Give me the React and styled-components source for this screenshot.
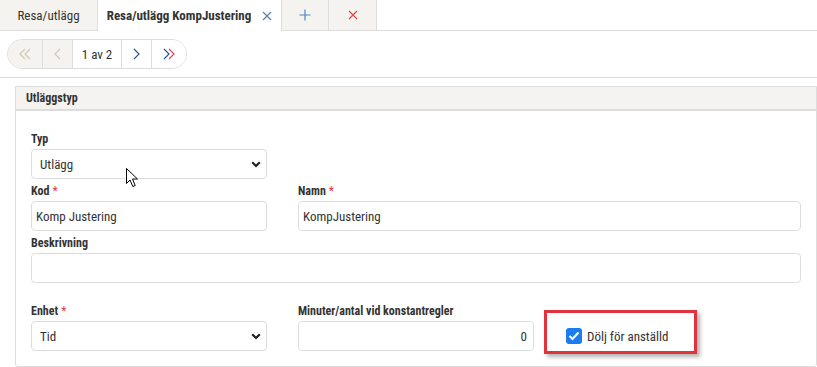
import styled, { createGlobalStyle } from 'styled-components'

const beige = '#f4f3ef'
const line = '#dddddd'

const GlobalStyle = createGlobalStyle`
  body {
    margin: 0;
    background: #fff;
    font-family: 'Roboto Condensed', Roboto, 'Liberation Sans', sans-serif;
    font-stretch: condensed;
    font-size: 12px;
    color: #333;
  }
`

const TabBar = styled.div`
  display: flex;
  height: 31px;
  box-sizing: border-box;
  border-bottom: 1px solid ${line};
`

const Tab = styled.div`
  box-sizing: border-box;
  width: ${props => props.$w}px;
  height: ${props => (props.$active ? 31 : 30)}px;
  display: flex;
  align-items: center;
  justify-content: center;
  gap: 11px;
  background: ${props => (props.$active ? '#fff' : beige)};
  border-right: 1px solid ${line};
  font-size: 13px;
  font-weight: ${props => (props.$active ? 700 : 400)};
  color: #333;
`

const Toolbar = styled.div`
  padding: 8px 7px;
  border-bottom: 1px solid ${line};
`

const Pager = styled.div`
  display: inline-flex;
  height: 30px;
  box-sizing: border-box;
  border: 1px solid ${line};
  border-radius: 15px;
  overflow: hidden;
`

const PageButton = styled.div`
  box-sizing: border-box;
  width: ${props => props.$w}px;
  display: flex;
  align-items: center;
  justify-content: center;
  background: ${props => (props.$disabled ? beige : '#fff')};
  font-size: 13px;
  color: #333;

  & + & {
    border-left: 1px solid ${line};
  }
`

const Content = styled.div`
  padding: 8px 0 0 15px;
`

const Panel = styled.section`
  border: 1px solid ${line};
  border-radius: 0 0 3px 3px;
`

const PanelHeader = styled.div`
  height: 22px;
  display: flex;
  align-items: center;
  padding-left: 10px;
  background: ${beige};
  border-bottom: 2px solid ${line};
  font-size: 12px;
  font-weight: 700;
`

const FormGrid = styled.div`
  display: grid;
  grid-template-columns: repeat(3, 236px);
  column-gap: 31px;
  row-gap: 4px;
  padding: 20px 15px 15px 15px;
`

const Field = styled.div`
  position: relative;
  display: flex;
  flex-direction: column;
  grid-column: span ${props => props.$span || 1};
  margin-top: ${props => (props.$spaced ? 16 : 0)}px;
`

const Label = styled.label`
  line-height: 16px;
  margin-bottom: 2px;
  font-weight: 700;
  font-size: 12px;
  color: #333;
`

const Required = styled.span`
  color: #e0393e;
  font-weight: 400;
  margin-left: 3px;
`

const TextInput = styled.input`
  box-sizing: border-box;
  width: 100%;
  height: 30px;
  border: 1px solid ${line};
  border-radius: 4px;
  padding: 0 ${props => (props.$right ? 6 : 4)}px;
  font: inherit;
  font-size: 13px;
  color: #333;
  text-align: ${props => (props.$right ? 'right' : 'left')};
  background: #fff;
  outline: none;
`

const SelectWrap = styled.div`
  position: relative;
  height: 30px;
`

const Select = styled.select`
  appearance: none;
  box-sizing: border-box;
  width: 100%;
  height: 30px;
  border: 1px solid ${line};
  border-radius: 4px;
  padding: 0 24px 0 8px;
  font: inherit;
  font-size: 13px;
  color: #333;
  background: #fff;
  outline: none;
`

const SelectArrow = styled.svg`
  position: absolute;
  right: 6px;
  top: 12px;
  pointer-events: none;
`

const Cursor = styled.svg`
  position: absolute;
  left: 95px;
  top: 37px;
  pointer-events: none;
`

const CheckCell = styled.div`
  position: relative;
  align-self: end;
  height: 30px;
  display: flex;
  align-items: center;
  padding-left: 1px;
  margin-top: 16px;
`

const Highlight = styled.div`
  position: absolute;
  left: -21px;
  top: -11px;
  width: 153px;
  height: 44px;
  box-sizing: border-box;
  border: 3px solid #e2323c;
  box-shadow: 3px 3px 4px rgba(0, 0, 0, 0.3);
  pointer-events: none;
`

const CheckBox = styled.span`
  width: 16px;
  height: 16px;
  border-radius: 3px;
  background: #1a7cf0;
  display: flex;
  align-items: center;
  justify-content: center;
`

const CheckText = styled.span`
  margin-left: 5px;
  font-size: 13px;
  color: #333;
`

const Chevron = ({ dir = 'right', double, color, color2 }) => {
  const pts = dir === 'right' ? '1,1 6,6 1,11' : '6,1 1,6 6,11'
  return (
    <svg width={double ? 12 : 7} height="12" viewBox={`0 0 ${double ? 12 : 7} 12`} fill="none">
      <polyline points={pts} stroke={color} strokeWidth="1.2" />
      {double && (
        <polyline
          points={pts}
          transform="translate(5 0)"
          stroke={color2 || color}
          strokeWidth="1.2"
        />
      )}
    </svg>
  )
}

const Cross = ({ color, size = 10 }) => (
  <svg width={size} height={size} viewBox="0 0 10 10">
    <path d="M1 1 L9 9 M9 1 L1 9" stroke={color} strokeWidth="1.2" />
  </svg>
)

const Plus = ({ color }) => (
  <svg width="12" height="12" viewBox="0 0 12 12">
    <path d="M6 0.5 V11.5 M0.5 6 H11.5" stroke={color} strokeWidth="1.2" />
  </svg>
)

const DownArrow = () => (
  <SelectArrow width="10" height="7" viewBox="0 0 10 7">
    <polyline points="1.2,1.2 5,5 8.8,1.2" fill="none" stroke="#222" strokeWidth="2.2" />
  </SelectArrow>
)

const App = () => {
  const disabled = '#cdc8b9'
  const blue = '#2f5597'

  return (
    <>
      <GlobalStyle />
      <TabBar>
        <Tab $w={98}>Resa/utlägg</Tab>
        <Tab $w={184} $active>
          Resa/utlägg KompJustering
          <Cross color="#5b7fa6" size={10} />
        </Tab>
        <Tab $w={47}>
          <Plus color="#4a86d0" />
        </Tab>
        <Tab $w={48}>
          <Cross color="#e04848" />
        </Tab>
      </TabBar>

      <Toolbar>
        <Pager>
          <PageButton $w={34} $disabled>
            <Chevron dir="left" double color={disabled} />
          </PageButton>
          <PageButton $w={30} $disabled>
            <Chevron dir="left" color={disabled} />
          </PageButton>
          <PageButton $w={49}>1 av 2</PageButton>
          <PageButton $w={30}>
            <Chevron color={blue} />
          </PageButton>
          <PageButton $w={35}>
            <Chevron double color={blue} color2="#d8475a" />
          </PageButton>
        </Pager>
      </Toolbar>

      <Content>
        <Panel>
          <PanelHeader>Utläggstyp</PanelHeader>
          <FormGrid>
            <Field>
              <Label>Typ</Label>
              <SelectWrap>
                <Select defaultValue="utlagg">
                  <option value="utlagg">Utlägg</option>
                </Select>
                <DownArrow />
              </SelectWrap>
              <Cursor width="13" height="20" viewBox="0 0 13 20">
                <path
                  d="M0.5 0.5 L0.5 15.5 L4 12 L6.8 18.5 L9.2 17.5 L6.5 11 L11.5 11 Z"
                  fill="#fff"
                  stroke="#000"
                  strokeWidth="1"
                />
              </Cursor>
            </Field>
            <div />
            <div />

            <Field>
              <Label>
                Kod<Required>*</Required>
              </Label>
              <TextInput readOnly defaultValue="Komp Justering" />
            </Field>
            <Field $span={2}>
              <Label>
                Namn<Required>*</Required>
              </Label>
              <TextInput readOnly defaultValue="KompJustering" />
            </Field>

            <Field $span={3}>
              <Label>Beskrivning</Label>
              <TextInput readOnly defaultValue="" />
            </Field>

            <Field $spaced>
              <Label>
                Enhet<Required>*</Required>
              </Label>
              <SelectWrap>
                <Select defaultValue="tid">
                  <option value="tid">Tid</option>
                </Select>
                <DownArrow />
              </SelectWrap>
            </Field>
            <Field $spaced>
              <Label>Minuter/antal vid konstantregler</Label>
              <TextInput readOnly $right defaultValue="0" />
            </Field>
            <CheckCell>
              <CheckBox>
                <svg width="12" height="10" viewBox="0 0 12 10">
                  <polyline points="1.5,5 4.5,8 10.5,1.5" fill="none" stroke="#fff" strokeWidth="2.2" />
                </svg>
              </CheckBox>
              <CheckText>Dölj för anställd</CheckText>
              <Highlight />
            </CheckCell>
          </FormGrid>
        </Panel>
      </Content>
    </>
  )
}

export default App
